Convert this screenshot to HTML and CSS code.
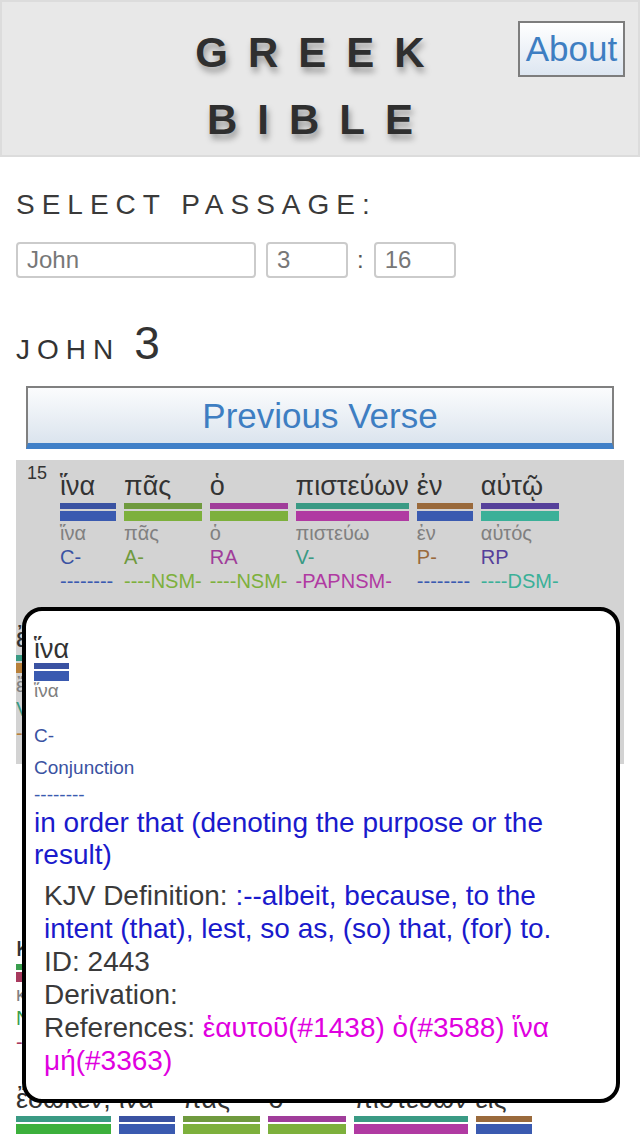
FILE: index.html
```html
<!DOCTYPE html>
<html lang="el">
<head>
<meta charset="utf-8">
<title>Greek Bible</title>
<link rel="stylesheet" href="styles.css">
</head>
<body>
<header class="site-header">
  <h1 class="site-title">GREEK BIBLE</h1>
  <a class="about-btn" href="#about">About</a>
</header>

<main class="content">
  <h2 class="select-title">SELECT PASSAGE:</h2>
  <div class="passage-form">
    <input class="field field-book" type="text" value="John">
    <input class="field field-num" type="text" value="3">
    <span class="colon">:</span>
    <input class="field field-num" type="text" value="16">
  </div>

  <h2 class="chapter-title"><span class="chapter-book">JOHN</span><span class="chapter-num">3</span></h2>

  <a class="nav-btn" href="#prev">Previous Verse</a>

  <div class="verse verse-active">
    <span class="verse-num">15</span>
    <div class="word"><div class="w-text">ἵνα</div><div class="bar k-conj"></div><div class="bar bar2 k-blue"></div><div class="lemma">ἵνα</div><div class="code k-conj">C-</div><div class="morph k-blue">--------</div></div>
    <div class="word"><div class="w-text">πᾶς</div><div class="bar k-adj"></div><div class="bar bar2 k-nom"></div><div class="lemma">πᾶς</div><div class="code k-adj">A-</div><div class="morph k-nom">----NSM-</div></div>
    <div class="word"><div class="w-text">ὁ</div><div class="bar k-art"></div><div class="bar bar2 k-nom"></div><div class="lemma">ὁ</div><div class="code k-art">RA</div><div class="morph k-nom">----NSM-</div></div>
    <div class="word"><div class="w-text">πιστεύων</div><div class="bar k-verb"></div><div class="bar bar2 k-ptc"></div><div class="lemma">πιστεύω</div><div class="code k-verb">V-</div><div class="morph k-ptc">-PAPNSM-</div></div>
    <div class="word"><div class="w-text">ἐν</div><div class="bar k-prep"></div><div class="bar bar2 k-blue"></div><div class="lemma">ἐν</div><div class="code k-prep">P-</div><div class="morph k-blue">--------</div></div>
    <div class="word"><div class="w-text">αὐτῷ</div><div class="bar k-pron"></div><div class="bar bar2 k-dat"></div><div class="lemma">αὐτός</div><div class="code k-pron">RP</div><div class="morph k-dat">----DSM-</div></div>
    <div class="word"><div class="w-text">ἔχῃ</div><div class="bar k-verb"></div><div class="bar bar2 k-subj"></div><div class="lemma">ἔχω</div><div class="code k-verb">V-</div><div class="morph k-subj">-PAS3S--</div></div>
    <div class="word"><div class="w-text">ζωὴν</div><div class="bar k-noun"></div><div class="bar bar2 k-acc"></div><div class="lemma">ζωή</div><div class="code k-noun">N-</div><div class="morph k-acc">----ASF-</div></div>
    <div class="word"><div class="w-text">αἰώνιον.</div><div class="bar k-adj"></div><div class="bar bar2 k-acc"></div><div class="lemma">αἰώνιος</div><div class="code k-adj">A-</div><div class="morph k-acc">----ASF-</div></div>
  </div>

  <div class="verse">
    <span class="verse-num">16</span>
    <div class="word"><div class="w-text">Οὕτως</div><div class="bar k-adv"></div><div class="bar bar2 k-blue"></div><div class="lemma">οὕτω(ς)</div><div class="code k-adv">D-</div><div class="morph k-blue">--------</div></div>
    <div class="word"><div class="w-text">γὰρ</div><div class="bar k-conj"></div><div class="bar bar2 k-blue"></div><div class="lemma">γάρ</div><div class="code k-conj">C-</div><div class="morph k-blue">--------</div></div>
    <div class="word"><div class="w-text">ἠγάπησεν</div><div class="bar k-verb"></div><div class="bar bar2 k-ind"></div><div class="lemma">ἀγαπάω</div><div class="code k-verb">V-</div><div class="morph k-ind">-AAI3S--</div></div>
    <div class="word"><div class="w-text">ὁ</div><div class="bar k-art"></div><div class="bar bar2 k-nom"></div><div class="lemma">ὁ</div><div class="code k-art">RA</div><div class="morph k-nom">----NSM-</div></div>
    <div class="word"><div class="w-text">θεὸς</div><div class="bar k-noun"></div><div class="bar bar2 k-nom"></div><div class="lemma">θεός</div><div class="code k-noun">N-</div><div class="morph k-nom">----NSM-</div></div>
    <div class="word"><div class="w-text">τὸν</div><div class="bar k-art"></div><div class="bar bar2 k-acc"></div><div class="lemma">ὁ</div><div class="code k-art">RA</div><div class="morph k-acc">----ASM-</div></div>
    <div class="word"><div class="w-text">κόσμον,</div><div class="bar k-noun"></div><div class="bar bar2 k-acc"></div><div class="lemma">κόσμος</div><div class="code k-noun">N-</div><div class="morph k-acc">----ASM-</div></div>
    <div class="word"><div class="w-text">ὥστε</div><div class="bar k-conj"></div><div class="bar bar2 k-blue"></div><div class="lemma">ὥστε</div><div class="code k-conj">C-</div><div class="morph k-blue">--------</div></div>
    <div class="word"><div class="w-text">τὸν</div><div class="bar k-art"></div><div class="bar bar2 k-acc"></div><div class="lemma">ὁ</div><div class="code k-art">RA</div><div class="morph k-acc">----ASM-</div></div>
    <div class="word"><div class="w-text">υἱὸν</div><div class="bar k-noun"></div><div class="bar bar2 k-acc"></div><div class="lemma">υἱός</div><div class="code k-noun">N-</div><div class="morph k-acc">----ASM-</div></div>
    <div class="word"><div class="w-text">τὸν</div><div class="bar k-art"></div><div class="bar bar2 k-acc"></div><div class="lemma">ὁ</div><div class="code k-art">RA</div><div class="morph k-acc">----ASM-</div></div>
    <div class="word"><div class="w-text">μονογενῆ</div><div class="bar k-adj"></div><div class="bar bar2 k-acc"></div><div class="lemma">μονογενής</div><div class="code k-adj">A-</div><div class="morph k-acc">----ASM-</div></div>
    <div class="word"><div class="w-text">ἔδωκεν,</div><div class="bar k-verb"></div><div class="bar bar2 k-ind"></div><div class="lemma">δίδωμι</div><div class="code k-verb">V-</div><div class="morph k-ind">-AAI3S--</div></div>
    <div class="word"><div class="w-text">ἵνα</div><div class="bar k-conj"></div><div class="bar bar2 k-blue"></div><div class="lemma">ἵνα</div><div class="code k-conj">C-</div><div class="morph k-blue">--------</div></div>
    <div class="word"><div class="w-text">πᾶς</div><div class="bar k-adj"></div><div class="bar bar2 k-nom"></div><div class="lemma">πᾶς</div><div class="code k-adj">A-</div><div class="morph k-nom">----NSM-</div></div>
    <div class="word"><div class="w-text">ὁ</div><div class="bar k-art"></div><div class="bar bar2 k-nom"></div><div class="lemma">ὁ</div><div class="code k-art">RA</div><div class="morph k-nom">----NSM-</div></div>
    <div class="word"><div class="w-text">πιστεύων</div><div class="bar k-verb"></div><div class="bar bar2 k-ptc"></div><div class="lemma">πιστεύω</div><div class="code k-verb">V-</div><div class="morph k-ptc">-PAPNSM-</div></div>
    <div class="word"><div class="w-text">εἰς</div><div class="bar k-prep"></div><div class="bar bar2 k-blue"></div><div class="lemma">εἰς</div><div class="code k-prep">P-</div><div class="morph k-blue">--------</div></div>
    <div class="word"><div class="w-text">αὐτὸν</div><div class="bar k-pron"></div><div class="bar bar2 k-acc"></div><div class="lemma">αὐτός</div><div class="code k-pron">RP</div><div class="morph k-acc">----ASM-</div></div>
  </div>
</main>

<div class="popup">
  <div class="p-head">
    <div class="p-word">ἵνα</div>
    <div class="bar k-conj"></div>
    <div class="bar bar2 k-blue"></div>
  </div>
  <div class="p-lemma">ἵνα</div>
  <div class="p-code k-conj">C-</div>
  <div class="p-pos k-conj">Conjunction</div>
  <div class="p-morph k-blue">--------</div>
  <div class="p-def">in order that (denoting the purpose or the result)</div>
  <div class="p-details">
    <div>KJV Definition: <span class="blue">:--albeit, because, to the intent (that), lest, so as, (so) that, (for) to.</span></div>
    <div>ID: 2443</div>
    <div>Derivation: </div>
    <div>References: <span class="refs">ἑαυτοῦ(#1438) ὁ(#3588) ἵνα μή(#3363)</span></div>
  </div>
</div>
</body>
</html>
```

FILE: styles.css
```css
* { box-sizing: border-box; }

html, body { margin: 0; padding: 0; }

body {
  position: relative;
  font-family: "Liberation Sans", Arial, "DejaVu Sans", sans-serif;
  color: #333;
  background: #fff;
}

/* Header */
.site-header {
  position: relative;
  height: 157px;
  background: #e8e8e8;
  border: 2px solid #dcdcdc;
  padding-top: 17px;
}

.site-title {
  width: 300px;
  margin: 0 auto;
  font-size: 42px;
  font-weight: bold;
  letter-spacing: 20px;
  line-height: 67px;
  text-align: center;
  color: #2f2f2f;
  text-shadow: 2px 5px 6px rgba(0, 0, 0, 0.35);
}

.about-btn {
  position: absolute;
  top: 19px;
  right: 13px;
  width: 107px;
  height: 56px;
  border: 2px solid #7d7d7d;
  background: linear-gradient(#ffffff, #dde6f1);
  color: #3e7ec2;
  font-size: 35px;
  line-height: 52px;
  text-align: center;
  text-decoration: none;
}

/* Content */
.content { padding: 0 16px; }

.select-title {
  margin: 31px 0 0;
  font-size: 28px;
  font-weight: normal;
  letter-spacing: 7px;
  line-height: 34px;
  color: #3a3a3a;
}

.passage-form {
  display: flex;
  align-items: center;
  margin-top: 20px;
}

.field {
  height: 36px;
  border: 2px solid #cbcbcb;
  border-radius: 4px;
  padding: 0 9px;
  font-family: "Liberation Sans", Arial, sans-serif;
  font-size: 24px;
  color: #777;
  background: #fff;
  outline: none;
}

.field-book { width: 240px; margin-right: 10px; }
.field-num { width: 82px; }

.colon {
  font-size: 24px;
  color: #555;
  margin: 0 10px 0 9px;
}

.chapter-title {
  display: flex;
  align-items: baseline;
  gap: 14px;
  margin: 42px 0 0;
  font-weight: normal;
  color: #333;
}

.chapter-book {
  font-size: 28px;
  line-height: 28px;
  letter-spacing: 7px;
}

.chapter-num {
  font-size: 46px;
  line-height: 46px;
}

.nav-btn {
  display: block;
  margin: 20px 10px 0;
  height: 63px;
  border: 2px solid #808080;
  border-bottom: 6px solid #4080c8;
  background: linear-gradient(#fbfcfd, #dbe4ee);
  color: #3e7ec2;
  font-size: 35px;
  line-height: 55px;
  text-align: center;
  text-decoration: none;
}

/* Verses */
.verse {
  font-size: 0;
  margin-top: 11px;
}

.verse + .verse { margin-top: 5px; }

.verse-active { background: #d3d3d3; }

.verse-num {
  display: inline-block;
  vertical-align: top;
  width: 36px;
  padding: 3px 0 0 11px;
  margin-right: 8px;
  font-size: 18px;
  line-height: 20px;
  color: #333;
}

.word {
  display: inline-block;
  vertical-align: top;
  min-width: 56px;
  margin-right: 8px;
  padding: 10px 0 19px;
}

.w-text {
  font-size: 27px;
  line-height: 33px;
  color: #333;
  white-space: nowrap;
}

.bar {
  height: 6px;
  background: currentColor;
}

.bar2 {
  height: 10px;
  margin-top: 2px;
}

.lemma, .code, .morph {
  font-size: 20px;
  line-height: 24px;
  white-space: nowrap;
}

.lemma { color: #808080; }

/* Part-of-speech colours */
.k-conj { color: #3a52a2; }
.k-blue { color: #3a5ab0; }
.k-adj { color: #6f9a3e; }
.k-nom { color: #7db03c; }
.k-art { color: #a03d9a; }
.k-verb { color: #3a9a84; }
.k-ptc { color: #b03aa2; }
.k-prep { color: #9a6a3c; }
.k-pron { color: #55409a; }
.k-dat { color: #3bb098; }
.k-acc { color: #a83a5e; }
.k-noun { color: #3a9e4e; }
.k-subj { color: #b8803a; }
.k-ind { color: #3cb03c; }
.k-adv { color: #c0703a; }

/* Popup */
.popup {
  position: absolute;
  top: 607px;
  left: 22px;
  width: 598px;
  height: 496px;
  background: #fff;
  border: 4px solid #000;
  border-radius: 20px;
  padding: 24px 8px 0;
}

.p-head { width: fit-content; }

.p-word {
  font-size: 27px;
  line-height: 28px;
  color: #333;
}

.p-lemma {
  font-size: 19px;
  line-height: 20px;
  color: #808080;
}

.p-code, .p-pos, .p-morph {
  font-size: 19px;
  line-height: 24px;
}

.p-code { margin-top: 23px; }
.p-pos { margin-top: 8px; }
.p-morph { margin-top: 3px; }

.p-def {
  font-size: 28px;
  line-height: 32px;
  color: #1a1acc;
}

.p-details {
  margin: 8px 10px 0;
  font-size: 28px;
  line-height: 33px;
  color: #3a3a3a;
}

.blue { color: #1a1acc; }
.refs { color: #e000e0; }
```
